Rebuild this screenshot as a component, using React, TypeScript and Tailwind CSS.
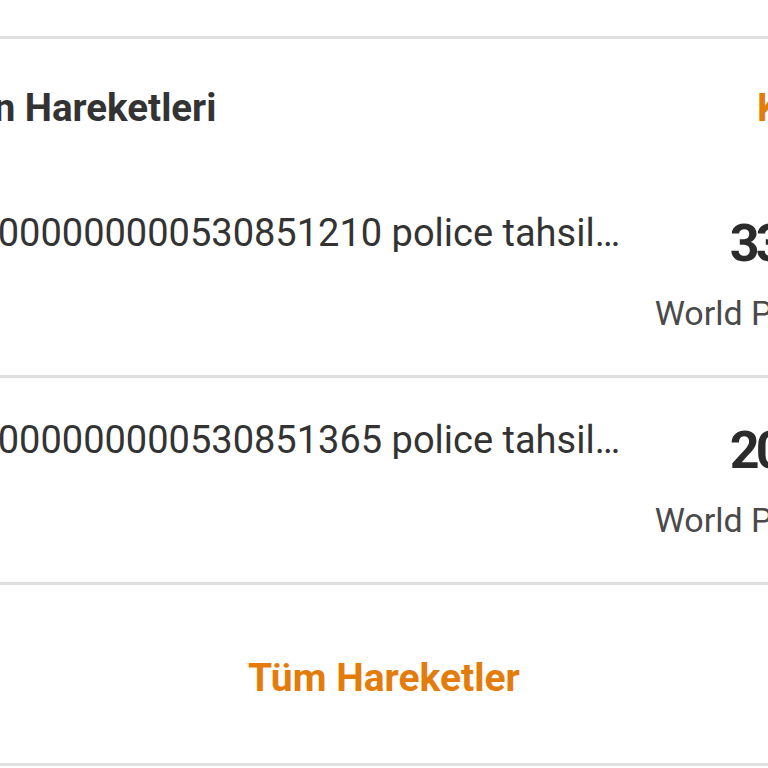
const rows = [
  { desc: '00000000000530851210 police tahsilatı', amount: '33,75', label: 'World Puanı' },
  { desc: '00000000000530851365 police tahsilatı', amount: '20,75', label: 'World Puanı' },
]

function TransactionRow({ desc, amount, label }: { desc: string; amount: string; label: string }) {
  return (
    <div className="flex h-[207px] border-b-[3px] border-[#e0e0e0]">
      <div className="w-[668px] shrink-0 min-w-0 pt-[43px]">
        <p className="truncate text-[38px] leading-none text-[#333333]">{desc}</p>
      </div>
      <div className="w-[214px] shrink-0 flex flex-col items-end pt-[47px]">
        <span className="-mr-[5px] text-[52px] leading-none font-bold tracking-[-4px] text-[#2b2b2b] whitespace-nowrap">
          {amount}
        </span>
        <span className="mt-[26px] text-[34px] leading-none text-[#4a4a4a] whitespace-nowrap">{label}</span>
      </div>
    </div>
  )
}

export default function App() {
  return (
    <div className="w-full min-h-[768px] bg-white font-[Roboto,sans-serif] overflow-hidden">
      <div className="h-[36px]" />
      <div className="border-t-[3px] border-[#e0e0e0] overflow-hidden">
        <div className="-ml-[45px] w-[1100px]">
          <div className="flex items-center h-[132px] pt-[6px]">
            <div className="w-[802px] shrink-0 whitespace-nowrap">
              <h2 className="-ml-[45px] text-[38.5px] leading-none font-bold text-[#333333]">Kartın Hareketleri</h2>
            </div>
            <a className="text-[38.5px] leading-none font-bold text-[#e47c0b] whitespace-nowrap">Kampanyalar</a>
          </div>
          {rows.map((r) => (
            <TransactionRow key={r.desc} {...r} />
          ))}
        </div>
      </div>
      <div className="h-[181px] flex justify-center pt-[74px] border-b-[3px] border-[#e0e0e0]">
        <button className="h-fit text-[39px] leading-none font-bold text-[#e47c0b]">Tüm Hareketler</button>
      </div>
    </div>
  )
}
